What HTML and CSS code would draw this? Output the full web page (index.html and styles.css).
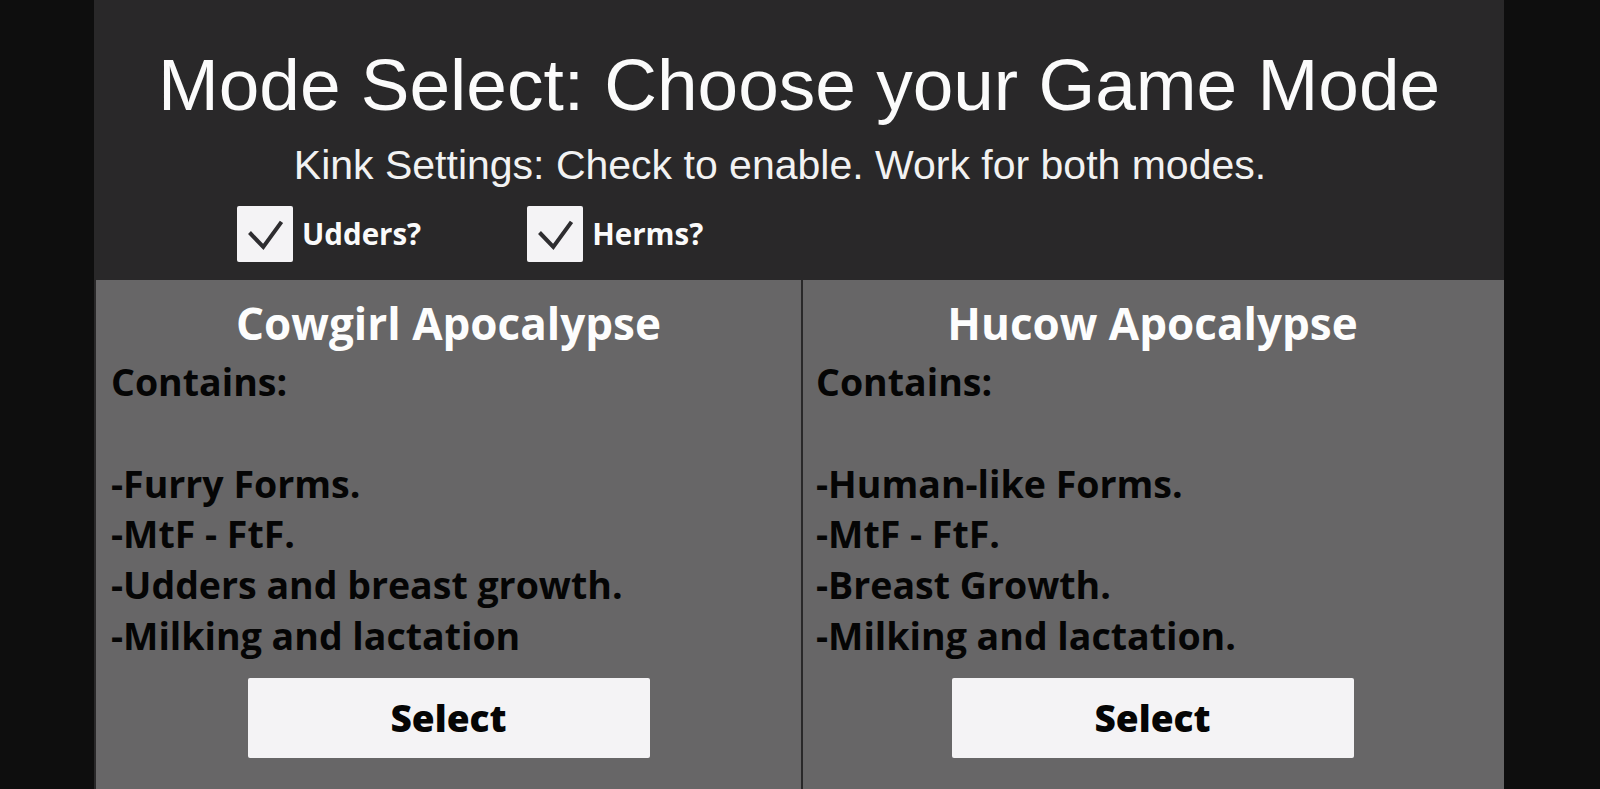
FILE: index.html
```html
<!DOCTYPE html>
<html lang="en">
<head>
    <meta charset="UTF-8">
    <meta name="viewport" content="width=device-width, initial-scale=1.0">
    <title>Mode Select</title>
    <link rel="stylesheet" href="styles.css">
</head>
<body>
    <div class="panel">
        <header class="mode-header">
            <h1 class="mode-title">Mode Select: Choose your Game Mode</h1>
            <p class="mode-subtitle">Kink Settings: Check to enable. Work for both modes.</p>
            <div class="kink-row">
                <label class="kink-option">
                    <span class="check-box">
                        <svg viewBox="0 0 56 56" width="56" height="56"><polyline points="12.5,26.5 26.3,41 44.5,15.8" /></svg>
                    </span>
                    <span class="check-label">Udders?</span>
                </label>
                <label class="kink-option">
                    <span class="check-box">
                        <svg viewBox="0 0 56 56" width="56" height="56"><polyline points="12.5,26.5 26.3,41 44.5,15.8" /></svg>
                    </span>
                    <span class="check-label">Herms?</span>
                </label>
            </div>
        </header>

        <div class="mode-grid">
            <div class="mode-card">
                <h2 class="mode-name">Cowgirl Apocalypse</h2>
                <ul class="mode-features">
                    <li>Contains:</li>
                    <li>&nbsp;</li>
                    <li>-Furry Forms.</li>
                    <li>-MtF - FtF.</li>
                    <li>-Udders and breast growth.</li>
                    <li>-Milking and lactation</li>
                </ul>
                <button class="mode-button">Select</button>
            </div>

            <div class="mode-card right">
                <h2 class="mode-name">Hucow Apocalypse</h2>
                <ul class="mode-features">
                    <li>Contains:</li>
                    <li>&nbsp;</li>
                    <li>-Human-like Forms.</li>
                    <li>-MtF - FtF.</li>
                    <li>-Breast Growth.</li>
                    <li>-Milking and lactation.</li>
                </ul>
                <button class="mode-button">Select</button>
            </div>
        </div>
    </div>
</body>
</html>
```

FILE: styles.css
```css
* {
    margin: 0;
    padding: 0;
    box-sizing: border-box;
}

:root {
    --outer-bg: #0e0e0e;
    --panel-bg: #292829;
    --card-bg: #676667;
    --light: #f4f3f5;
    --ink: #050505;
}

body {
    background: var(--outer-bg);
    font-family: "Open Sans", "Noto Sans", sans-serif;
    height: 789px;
    overflow: hidden;
}

.panel {
    width: 1410px;
    height: 789px;
    margin-left: 94px;
    background: var(--panel-bg);
    display: flex;
    flex-direction: column;
}

/* header */
.mode-header {
    height: 280px;
    padding-top: 45px;
    text-align: center;
}

.mode-title {
    font-family: "Liberation Sans", Arial, sans-serif;
    font-weight: normal;
    font-size: 73px;
    line-height: 80px;
    color: #fbfbfb;
    white-space: nowrap;
}

.mode-subtitle {
    font-family: "Liberation Sans", Arial, sans-serif;
    font-size: 41px;
    line-height: 44px;
    color: #f2f2f2;
    margin-top: 18px;
    padding-right: 38px;
    white-space: nowrap;
}

.kink-row {
    display: flex;
    gap: 106px;
    padding-left: 143px;
    margin-top: 19px;
}

.kink-option {
    display: flex;
    align-items: center;
    gap: 9px;
}

.check-box {
    width: 56px;
    height: 56px;
    background: var(--light);
    border-radius: 2px;
    display: block;
}

.check-box svg {
    display: block;
}

.check-box polyline {
    fill: none;
    stroke: #2e2d30;
    stroke-width: 4;
}

.check-label {
    font-weight: 700;
    font-size: 29.5px;
    line-height: 40px;
    color: #fafafa;
}

/* cards */
.mode-grid {
    flex: 1;
    display: grid;
    grid-template-columns: 705px 701px;
    gap: 2px;
    padding-left: 2px;
}

.mode-card {
    background: var(--card-bg);
    padding: 18px 15px 0;
    display: flex;
    flex-direction: column;
}

.mode-card.right {
    padding-left: 13px;
}

.mode-name {
    text-align: center;
    font-size: 44px;
    line-height: 50px;
    font-weight: 700;
    color: #fdfdfd;
}

.mode-features {
    list-style: none;
    margin-top: 9px;
    font-size: 37.5px;
    line-height: 50.8px;
    font-weight: 700;
    color: var(--ink);
}

.mode-button {
    align-self: center;
    width: 402px;
    height: 80px;
    margin-top: 16px;
    background: var(--light);
    border: none;
    border-radius: 2px;
    font-family: "Open Sans", "Noto Sans", sans-serif;
    font-size: 37px;
    font-weight: 800;
    color: var(--ink);
}
```
